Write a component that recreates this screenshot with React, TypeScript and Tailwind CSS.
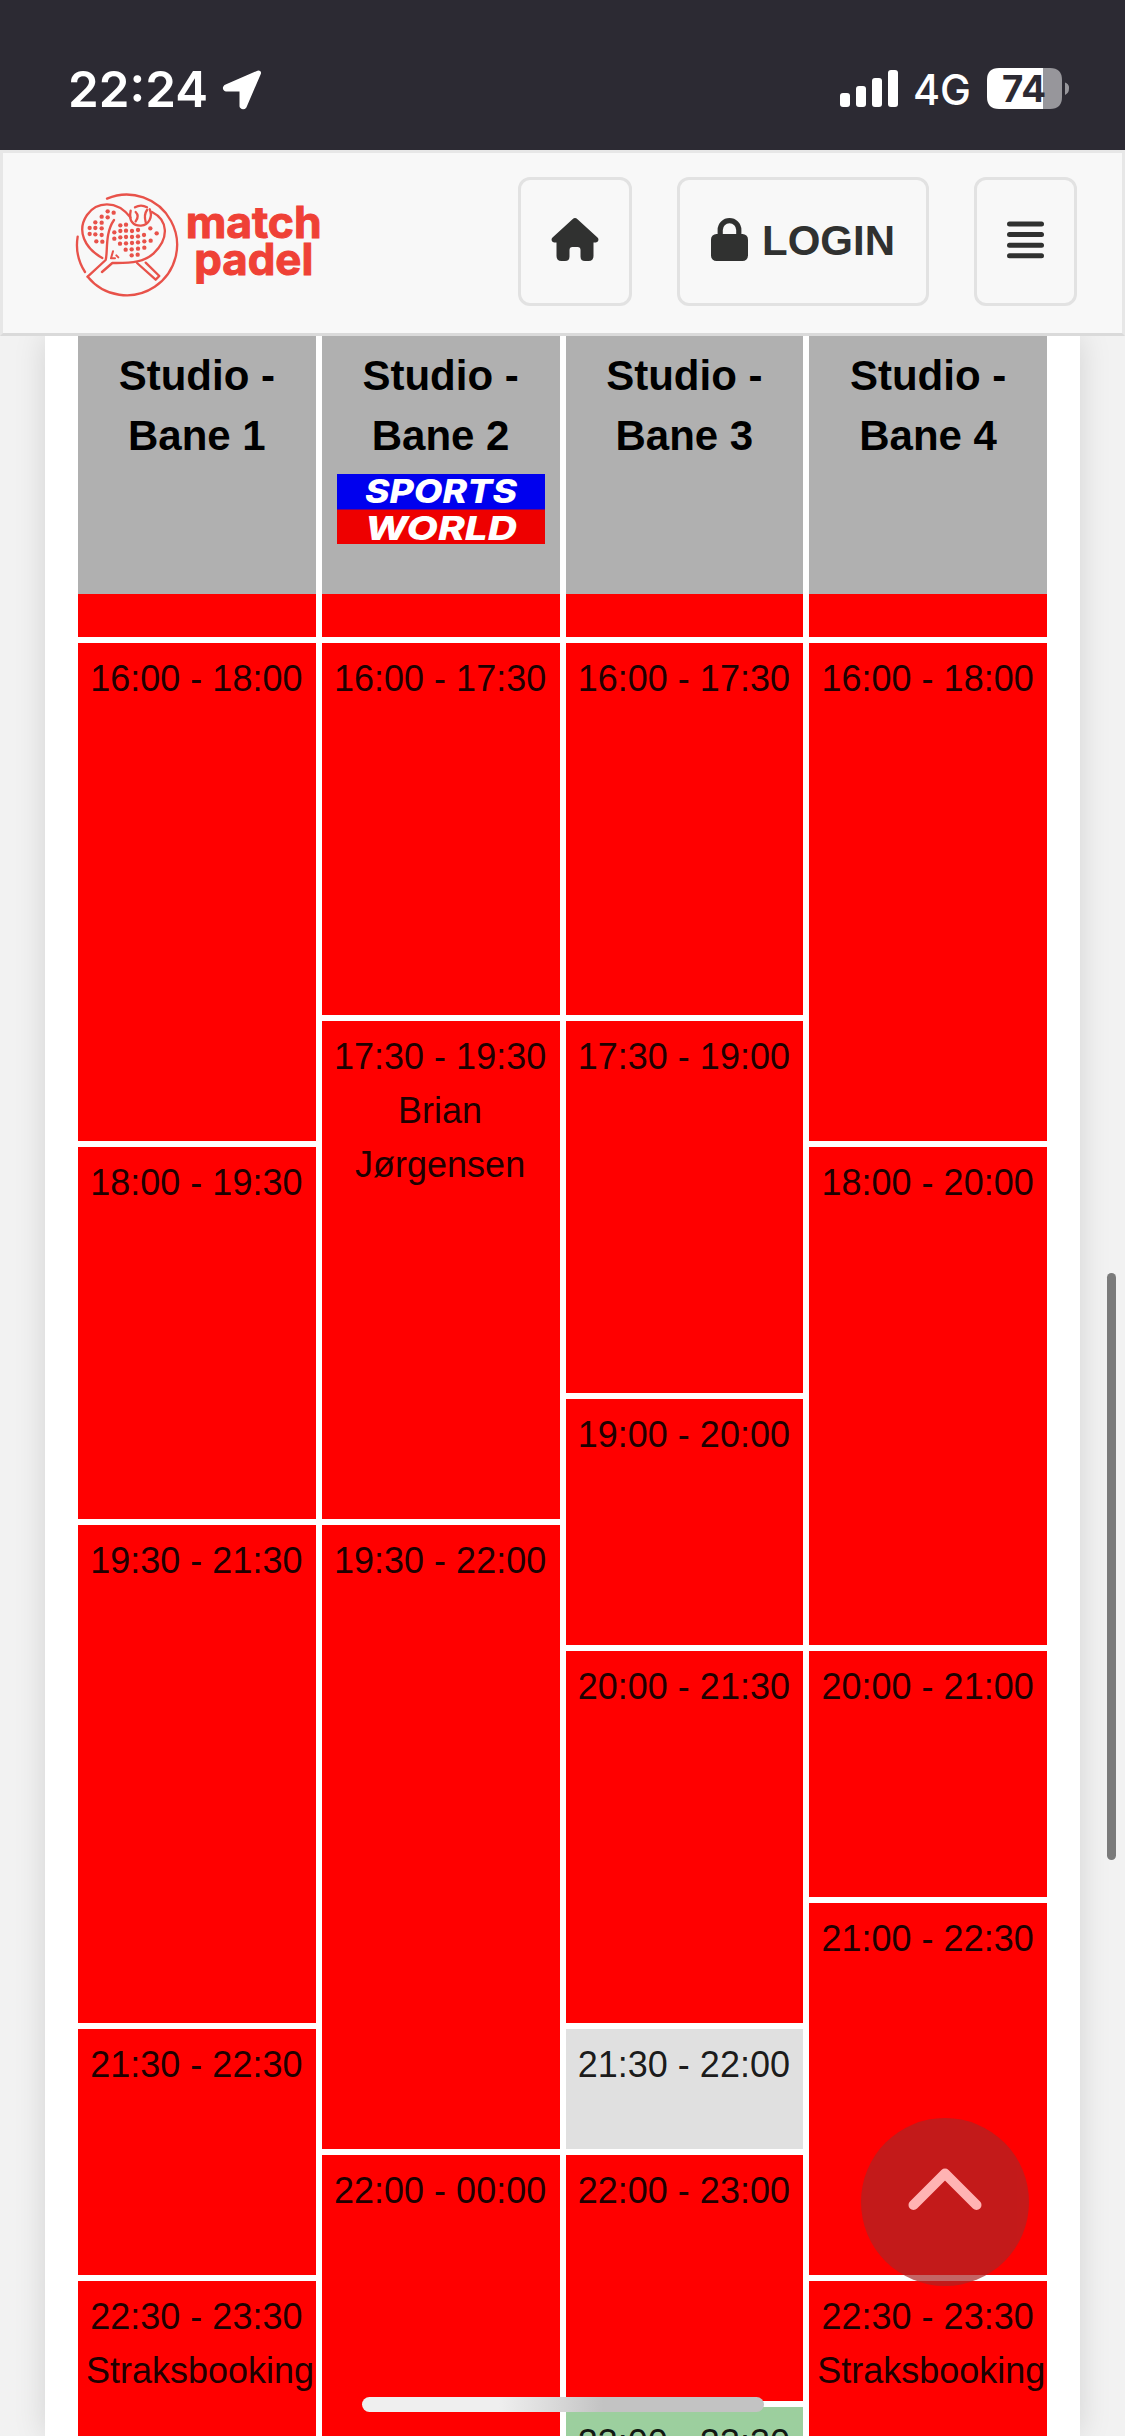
import React from "react";

type Tone = "booked" | "past" | "free";
type Slot = { label: string; units: number; name?: string; tone?: Tone };
type Court = { title: string; sponsor?: boolean; slots: Slot[] };

const UNIT = 126;
const GAP = 6;

const TONES: Record<Tone, string> = {
  booked: "bg-[#ff0000]",
  past: "bg-[#e0e0e0]",
  free: "bg-[#9ccf9e]",
};

const courts: Court[] = [
  {
    title: "Studio - Bane 1",
    slots: [
      { label: "16:00 - 18:00", units: 4 },
      { label: "18:00 - 19:30", units: 3 },
      { label: "19:30 - 21:30", units: 4 },
      { label: "21:30 - 22:30", units: 2 },
      { label: "22:30 - 23:30", units: 2, name: "Straksbooking" },
    ],
  },
  {
    title: "Studio - Bane 2",
    sponsor: true,
    slots: [
      { label: "16:00 - 17:30", units: 3 },
      { label: "17:30 - 19:30", units: 4, name: "Brian Jørgensen" },
      { label: "19:30 - 22:00", units: 5 },
      { label: "22:00 - 00:00", units: 4 },
    ],
  },
  {
    title: "Studio - Bane 3",
    slots: [
      { label: "16:00 - 17:30", units: 3 },
      { label: "17:30 - 19:00", units: 3 },
      { label: "19:00 - 20:00", units: 2 },
      { label: "20:00 - 21:30", units: 3 },
      { label: "21:30 - 22:00", units: 1, tone: "past" },
      { label: "22:00 - 23:00", units: 2 },
      { label: "23:00 - 23:30", units: 1, tone: "free" },
    ],
  },
  {
    title: "Studio - Bane 4",
    slots: [
      { label: "16:00 - 18:00", units: 4 },
      { label: "18:00 - 20:00", units: 4 },
      { label: "20:00 - 21:00", units: 2 },
      { label: "21:00 - 22:30", units: 3 },
      { label: "22:30 - 23:30", units: 2, name: "Straksbooking" },
    ],
  },
];

function StatusBar() {
  return (
    <div className="flex h-[150px] shrink-0 items-start justify-between bg-[#2c2a33] pl-[67px] pr-[56px] pt-[68px] text-white">
      <div className="flex items-start">
        <svg className="-mt-[12px]" width="143" height="70" viewBox="0 0 143 70" fill="#fff">
          <text x="1" y="51" fontFamily="Inter, sans-serif" fontWeight="600" fontSize="50" textLength="140" lengthAdjust="spacingAndGlyphs">
            22:24
          </text>
        </svg>
        <svg className="ml-[11px] mt-[1px]" width="42" height="42" viewBox="0 0 42 42" fill="#fff" stroke="#fff" strokeWidth="5" strokeLinejoin="round">
          <path d="M37.500 4 5 18Q4 19 5 20H21V37Q22 38.500 23.200 37.200Z" />
        </svg>
      </div>
      <div className="flex items-start">
        <svg className="mt-[2px]" width="58" height="37" viewBox="0 0 58 37" fill="#fff">
          <rect x="0" y="23" width="10" height="14" rx="3" />
          <rect x="16" y="16" width="10" height="21" rx="3" />
          <rect x="32" y="8" width="10" height="29" rx="3" />
          <rect x="48" y="0" width="10" height="37" rx="3" />
        </svg>
        <svg className="-mt-[10px] ml-[15px]" width="60" height="62" viewBox="0 0 60 62" fill="#fff">
          <text x="0" y="47" fontFamily="Inter, sans-serif" fontWeight="500" fontSize="42" textLength="58" lengthAdjust="spacingAndGlyphs">
            4G
          </text>
        </svg>
        <svg className="-mt-[10px] ml-[14px]" width="82" height="61" viewBox="0 -10 82 61">
          <path d="M12 0H56V41H12Q0 41 0 29V12Q0 0 12 0Z" fill="#fff" />
          <path d="M56 0H63Q75 0 75 12V29Q75 41 63 41H56Z" fill="#97969b" />
          <path d="M78 14.500Q82.500 16 82 20.500Q82 25 78 27Z" fill="#97969b" />
          <text x="15" y="34" fontFamily="Inter, sans-serif" fontWeight="700" fontSize="37" fill="#2c2a33" textLength="44" lengthAdjust="spacingAndGlyphs">
            74
          </text>
        </svg>
      </div>
    </div>
  );
}

const leftDots = [
  [144, 94], [126, 110], [162, 98], [144, 112],
  [107, 127], [126, 128], [90, 144], [107, 144], [126, 145],
  [90, 162], [107, 163], [126, 165], [110, 184], [128, 185],
];
const rightDots = [
  [182, 136], [199, 134], [164, 157], [182, 153], [199, 152], [217, 153], [235, 150], [272, 145],
  [164, 176], [182, 172], [199, 171], [217, 171], [235, 169], [253, 165], [291, 160],
  [181, 191], [199, 190], [217, 189], [235, 187], [254, 184], [273, 182],
  [198, 209], [216, 208], [235, 206], [254, 203],
  [216, 226], [234, 224],
];

function Logo() {
  return (
    <svg width="250" height="110" viewBox="40 30 750 330">
      <g fill="none" stroke="#e8524a" strokeWidth="7" strokeLinecap="round" strokeLinejoin="round">
        <path d="M142 56A151 151 0 1 1 84 290" />
        <path d="M54 170A151 151 0 0 0 76 276" />
        <path d="M212 112C170 58 110 65 82 105C50 152 75 205 128 234" />
        <path d="M163 120C135 160 145 215 138 240L84 290" />
        <path d="M127 276L158 249C220 250 255 245 282 220C330 175 325 120 277 96" />
        <path d="M213 92C206 124 222 138 244 137C268 135 280 110 270 88M226 82Q244 72 262 82M228 96Q240 108 228 124M262 90Q252 104 258 126" />
        <path d="M232 249L288 299L299 288L258 248" />
        <path d="M160 214L154 235H166M170 226L176 232" strokeWidth="6" />
      </g>
      <g fill="#e8524a">
        {[...leftDots, ...rightDots].map(([x, y]) => (
          <circle key={`${x}-${y}`} cx={x} cy={y} r="6.500" />
        ))}
      </g>
      <g fill="#ef4136" stroke="#ef4136" strokeWidth="3" fontFamily="Inter, sans-serif" fontWeight="700">
        <text x="378" y="175" fontSize="130" textLength="408" lengthAdjust="spacingAndGlyphs">match</text>
        <text x="404" y="285" fontSize="130" textLength="357" lengthAdjust="spacingAndGlyphs">padel</text>
      </g>
    </svg>
  );
}

function NavButton({ className, children }: { className: string; children: React.ReactNode }) {
  return (
    <button
      className={`flex h-[129px] items-center justify-center rounded-[12px] border-[3px] border-[#e2e2e2] text-[42px] font-bold text-[#303130] ${className}`}
    >
      {children}
    </button>
  );
}

function NavBar() {
  return (
    <header className="relative z-10 flex h-[186px] shrink-0 items-start border-[3px] border-[#e7e7e7] border-b-[#dadada] bg-[#f8f8f8] pl-[70px] pt-[24px]">
      <div className="mt-[13px]">
        <Logo />
      </div>
      <NavButton className="ml-[195px] w-[114px]">
        <svg className="-mt-[4px]" width="48" height="43" viewBox="0 0 48 43" fill="#303130">
          <path d="M21.500 1.200Q24 -1 26.500 1.200L47 20Q48.500 23.500 45 24.500H42.500V38Q42.500 43 37.500 43H34Q29.500 43 29.500 38.500V32Q29.500 29 26.500 29H21.500Q18.500 29 18.500 32V38.500Q18.500 43 14 43H10.500Q5.500 43 5.500 38V24.500H3Q-.5 23.500 1 20Z" />
        </svg>
      </NavButton>
      <NavButton className="ml-[45px] w-[252px]">
        <svg className="-mt-[4px]" width="37" height="43" viewBox="0 0 37 43">
          <rect x="0" y="16" width="37" height="27" rx="5.500" fill="#303130" />
          <path d="M9.200 18V12a9.300 9.300 0 0 1 18.600 0V18" fill="none" stroke="#303130" strokeWidth="5.200" />
        </svg>
        <span className="-mt-[2px] ml-[14px] leading-[60px]">LOGIN</span>
      </NavButton>
      <NavButton className="ml-[45px] w-[103px]">
        <svg className="-mt-[3px]" width="37" height="38" viewBox="0 0 37 38" fill="#303130">
          <rect y="0.500" width="37" height="5" rx="2.500" />
          <rect y="11.100" width="37" height="5" rx="2.500" />
          <rect y="21.700" width="37" height="5" rx="2.500" />
          <rect y="32.300" width="37" height="5" rx="2.500" />
        </svg>
      </NavButton>
    </header>
  );
}

function SportsWorld() {
  return (
    <svg className="mt-[8px]" width="208" height="70" viewBox="0 0 208 70">
      <rect width="208" height="36" fill="#0000ee" />
      <rect y="35.500" width="208" height="34.500" fill="#ee0000" />
      <g fill="#fff" fontFamily="Inter, sans-serif" fontWeight="800" fontStyle="italic" fontSize="33">
        <text x="28" y="28.500" textLength="152" lengthAdjust="spacingAndGlyphs">SPORTS</text>
        <text x="28" y="66" textLength="152" lengthAdjust="spacingAndGlyphs">WORLD</text>
      </g>
    </svg>
  );
}

function CourtColumn({ court }: { court: Court }) {
  return (
    <div className="flex min-w-0 flex-col">
      <div className="flex h-[258px] shrink-0 flex-col items-center bg-[#b0b0b0] pt-[10px]">
        <div className="w-[180px] text-center text-[42px] font-bold leading-[60px] text-black">{court.title}</div>
        {court.sponsor && <SportsWorld />}
      </div>
      <div className="mb-[6px] h-[43px] shrink-0 bg-[#ff0000]" />
      {court.slots.map((slot) => (
        <div
          key={slot.label}
          className={`mb-[6px] shrink-0 px-[9px] pt-[9px] text-center text-[36px] leading-[54px] text-black/90 ${TONES[slot.tone ?? "booked"]}`}
          style={{ height: slot.units * UNIT - GAP }}
        >
          <div className="-ml-[1px] whitespace-nowrap">{slot.label}</div>
          {slot.name && <div className="-ml-[1px]">{slot.name}</div>}
        </div>
      ))}
    </div>
  );
}

export default function App() {
  return (
    <div className="relative flex h-[2436px] w-[1125px] flex-col overflow-hidden bg-[#f2f2f2] font-['Liberation_Sans',Arial,sans-serif]">
      <StatusBar />
      <NavBar />
      <main className="mx-[45px] h-[2100px] bg-white px-[33px] shadow-[0_0_30px_rgba(0,0,0,0.13)]">
        <div className="grid grid-cols-4 gap-[6px]">
          {courts.map((court) => (
            <CourtColumn key={court.title} court={court} />
          ))}
        </div>
      </main>

      <div className="absolute left-[1107px] top-[1273px] h-[587px] w-[9px] rounded-full bg-[#7b7b7b]" />

      <button className="absolute left-[861px] top-[2118px] flex h-[168px] w-[168px] items-start justify-center rounded-full bg-[#ab2525] pt-[50px] opacity-70">
        <svg width="74" height="42" viewBox="0 0 74 42" fill="none" stroke="#fff" strokeWidth="10" strokeLinecap="round" strokeLinejoin="round">
          <path d="M5.500 37 37 5.500 68.500 37" />
        </svg>
      </button>

      <div className="absolute left-[362px] top-[2397px] h-[15px] w-[402px] rounded-full bg-[linear-gradient(90deg,#efefef_0%,#efefef_34%,#dcdcdc_46%,#c3c3c3_60%,#c3c3c3_100%)]" />
    </div>
  );
}
